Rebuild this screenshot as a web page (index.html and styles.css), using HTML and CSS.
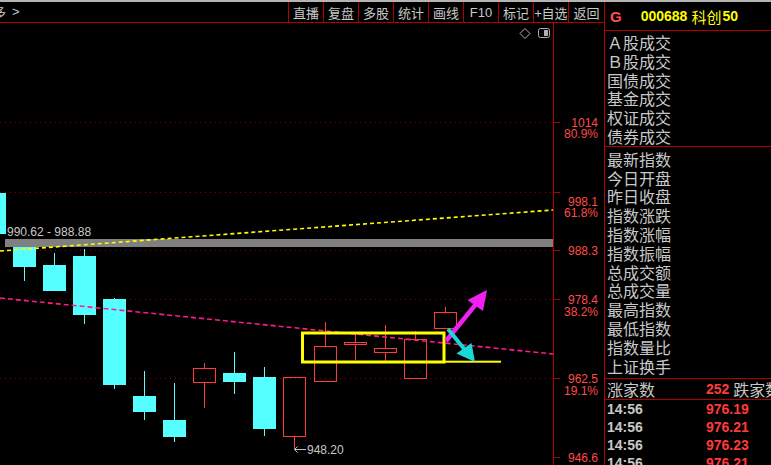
FILE: index.html
```html
<!DOCTYPE html>
<html lang="zh-CN">
<head>
<meta charset="utf-8">
<title>科创50</title>
<link rel="stylesheet" href="styles.css">
</head>
<body>
<div class="topline"></div>
<div class="app">
  <div class="main">
    <div class="toolbar">
      <div class="crumb"><span class="cut">多</span><span class="gt">&gt;</span></div>
      <div class="tools">
        <span class="tool">直播</span>
        <span class="tool">复盘</span>
        <span class="tool">多股</span>
        <span class="tool">统计</span>
        <span class="tool">画线</span>
        <span class="tool latin">F10</span>
        <span class="tool">标记</span>
        <span class="tool">+自选</span>
        <span class="tool">返回</span>
      </div>
    </div>
    <div class="chart">
      <div class="plot">
        <svg class="plot-svg" width="553" height="442" viewBox="0 23 553 442">
          <g stroke="#900000" stroke-width="1" stroke-dasharray="1 4">
            <line x1="0" y1="122.5" x2="553" y2="122.5"/>
            <line x1="0" y1="192.5" x2="553" y2="192.5"/>
            <line x1="0" y1="250.5" x2="553" y2="250.5"/>
            <line x1="0" y1="299.5" x2="553" y2="299.5"/>
            <line x1="0" y1="378.5" x2="553" y2="378.5"/>
          </g>
          <g fill="#55ffff">
            <rect x="0" y="193" width="6" height="41"/>
            <rect x="13" y="240" width="23" height="27"/><rect x="24" y="267" width="1" height="14"/>
            <rect x="43" y="265" width="23" height="26"/><rect x="54" y="253" width="1" height="12"/>
            <rect x="73" y="256" width="23" height="59"/><rect x="84" y="249" width="1" height="75"/>
            <rect x="103" y="299" width="23" height="86"/><rect x="114" y="298" width="1" height="91"/>
            <rect x="133" y="396" width="23" height="16"/><rect x="144" y="371" width="1" height="49"/>
            <rect x="163" y="420" width="23" height="17"/><rect x="174" y="383" width="1" height="59"/>
            <rect x="223" y="373" width="23" height="9"/><rect x="234" y="352" width="1" height="42"/>
            <rect x="253" y="377" width="23" height="52"/><rect x="264" y="367" width="1" height="69"/>
          </g>
          <g fill="none" stroke="#ff3a3a" stroke-width="1">
            <rect x="193.5" y="368.5" width="22" height="14"/>
            <rect x="283.5" y="377.5" width="22" height="59"/>
            <rect x="314.5" y="346.5" width="22" height="35"/>
            <rect x="344.5" y="342.5" width="22" height="2"/>
            <rect x="374.5" y="348.5" width="22" height="4"/>
            <rect x="404.5" y="339.5" width="22" height="39"/>
            <rect x="434.5" y="312.5" width="22" height="16"/>
          </g>
          <g fill="#ff3a3a">
            <rect x="204" y="363" width="1" height="5"/><rect x="204" y="383" width="1" height="25"/>
            <rect x="294" y="437" width="1" height="13"/>
            <rect x="325" y="322" width="1" height="24"/>
            <rect x="355" y="333" width="1" height="9"/><rect x="355" y="345" width="1" height="15"/>
            <rect x="385" y="325" width="1" height="23"/><rect x="385" y="353" width="1" height="8"/>
            <rect x="415" y="331" width="1" height="8"/>
            <rect x="445" y="307" width="1" height="5"/>
          </g>
          <rect x="5" y="239" width="548" height="8" fill="#808080"/>
          <text class="svg-label" x="7" y="235.5">990.62 - 988.88</text>
          <line x1="0" y1="251" x2="553" y2="210" stroke="#ffff00" stroke-width="1.6" stroke-dasharray="4 3"/>
          <line x1="0" y1="298" x2="553" y2="354" stroke="#ff1a8c" stroke-width="1.6" stroke-dasharray="5 3"/>
          <path d="M294.5 449.5 H306 M294.5 449.5 l3 -3 M294.5 449.5 l3 3" stroke="#c0c0c0" stroke-width="1" fill="none"/>
          <text class="svg-label" x="307" y="454">948.20</text>
          <rect x="302.5" y="333" width="141.5" height="29" fill="none" stroke="#ffff00" stroke-width="3"/>
          <rect x="444" y="360.7" width="57" height="2" fill="#ffff00"/>
          <line x1="446" y1="341" x2="476" y2="304" stroke="#f020f0" stroke-width="4.5"/>
          <polygon points="467.5,300 487,290 483,311" fill="#f020f0"/>
          <line x1="448" y1="329" x2="465" y2="350" stroke="#1ad8d8" stroke-width="4"/>
          <polygon points="456.5,353.5 475,362 471.5,343" fill="#1ad8d8"/>
        </svg>
        <div class="plot-icons">
          <svg width="12" height="11" viewBox="0 0 12 11"><polygon points="6,0.5 11,5.5 6,10.5 1,5.5" fill="none" stroke="#b0b0b0" stroke-width="1"/></svg>
          <svg width="13" height="11" viewBox="0 0 13 11"><rect x="0.5" y="0.5" width="11" height="9" rx="2" fill="none" stroke="#b0b0b0" stroke-width="1"/><rect x="6" y="2" width="4" height="6" fill="#b0b0b0"/></svg>
        </div>
      </div>
      <div class="axis">
        <svg width="50" height="442" viewBox="0 23 50 442">
          <g fill="#b00000">
            <rect x="0" y="122" width="6" height="1"/>
            <rect x="0" y="192" width="6" height="1"/>
            <rect x="0" y="250" width="6" height="1"/>
            <rect x="0" y="299" width="6" height="1"/>
            <rect x="0" y="378" width="6" height="1"/>
            <rect x="0" y="457" width="6" height="1"/>
          </g>
          <g class="axis-label" text-anchor="end">
            <text x="44" y="127">1014</text>
            <text x="44" y="138">80.9%</text>
            <text x="44" y="205.5">998.1</text>
            <text x="44" y="216.5">61.8%</text>
            <text x="44" y="255">988.3</text>
            <text x="44" y="304">978.4</text>
            <text x="44" y="315.5">38.2%</text>
            <text x="44" y="383">962.5</text>
            <text x="44" y="394.5">19.1%</text>
            <text x="44" y="461.5">946.6</text>
          </g>
        </svg>
      </div>
    </div>
  </div>
  <aside class="panel">
    <div class="panel-head"><span class="g">G</span><span class="code">000688</span><span class="name">科创</span><span class="code">50</span></div>
    <ul class="rows sec1">
      <li>Ａ股成交</li>
      <li>Ｂ股成交</li>
      <li>国债成交</li>
      <li>基金成交</li>
      <li>权证成交</li>
      <li>债券成交</li>
    </ul>
    <ul class="rows sec2">
      <li>最新指数</li>
      <li>今日开盘</li>
      <li>昨日收盘</li>
      <li>指数涨跌</li>
      <li>指数涨幅</li>
      <li>指数振幅</li>
      <li>总成交额</li>
      <li>总成交量</li>
      <li>最高指数</li>
      <li>最低指数</li>
      <li>指数量比</li>
      <li>上证换手</li>
    </ul>
    <div class="breadth"><span class="b-label">涨家数</span><span class="b-num">252</span><span class="b-label2">跌家数</span></div>
    <div class="ticks">
      <span class="t">14:56</span><span class="p">976.19</span>
      <span class="t">14:56</span><span class="p">976.21</span>
      <span class="t">14:56</span><span class="p">976.23</span>
      <span class="t">14:56</span><span class="p">976.21</span>
    </div>
  </aside>
</div>
</body>
</html>
```
FILE: styles.css
```css
html, body {
  margin: 0;
  padding: 0;
  background: #000;
}
body {
  width: 771px;
  height: 465px;
  overflow: hidden;
  font-family: "Noto Sans CJK SC", "Liberation Sans", sans-serif;
  color: #c8c8c8;
}
.topline {
  height: 2px;
  background: #b4b4b4;
}
.app {
  display: flex;
  height: 463px;
}
.main {
  width: 604px;
  display: flex;
  flex-direction: column;
}
.toolbar {
  height: 20px;
  flex: none;
  border-bottom: 1px solid #b00000;
  display: flex;
}
.crumb {
  flex: 1;
  display: flex;
  align-items: center;
  overflow: hidden;
  font-size: 13px;
  line-height: 20px;
}
.crumb .cut {
  margin-left: -7px;
}
.crumb .gt {
  margin-left: 6px;
  font-family: "Liberation Sans", sans-serif;
  font-size: 13px;
}
.tools {
  display: flex;
}
.tool {
  width: 34px;
  border-left: 1px solid #b00000;
  display: flex;
  align-items: center;
  justify-content: center;
  font-size: 13px;
  white-space: nowrap;
}
.tool:last-child {
  width: 35px;
}
.tool.latin {
  font-family: "Liberation Sans", sans-serif;
}
.chart {
  flex: 1;
  display: flex;
  min-height: 0;
}
.plot {
  width: 553px;
  position: relative;
}
.plot-svg {
  display: block;
}
.svg-label {
  font-family: "Liberation Sans", sans-serif;
  font-size: 12px;
  fill: #c8c8c8;
}
.plot-icons {
  position: absolute;
  top: 5px;
  right: 2px;
  display: flex;
  gap: 7px;
}
.plot-icons svg {
  display: block;
}
.axis {
  width: 50px;
  border-left: 1px solid #b00000;
}
.axis svg {
  display: block;
}
.axis-label {
  font-family: "Liberation Sans", sans-serif;
  font-size: 12px;
  fill: #ff4a4a;
}
.panel {
  width: 166px;
  border-left: 1px solid #b00000;
  display: flex;
  flex-direction: column;
  overflow: hidden;
}
.panel > * {
  flex: none;
}
.panel-head {
  height: 28px;
  border-bottom: 1px solid #b00000;
  display: flex;
  align-items: center;
  padding-left: 5px;
}
.panel-head .g {
  font-family: "Liberation Sans", sans-serif;
  font-weight: bold;
  font-size: 15px;
  color: #ff5050;
  margin-right: 19px;
}
.panel-head .code {
  font-family: "Liberation Sans", sans-serif;
  font-weight: bold;
  font-size: 14px;
  color: #ffff00;
}
.panel-head .name {
  font-size: 15px;
  color: #ffff00;
  margin: 0 1px 0 4px;
}
.rows {
  list-style: none;
  margin: 0;
  padding: 0 0 0 2px;
  border-bottom: 1px solid #b00000;
  font-size: 16px;
  line-height: 18.8px;
}
.sec1 {
  padding-top: 2px;
}
.sec2 {
  padding-top: 3px;
  padding-bottom: 3px;
}
.rows li {
  height: 18.8px;
  white-space: nowrap;
}
.breadth {
  height: 20px;
  border-bottom: 1px solid #b00000;
  display: flex;
  align-items: center;
  padding-left: 2px;
  font-size: 16px;
  white-space: nowrap;
  overflow: hidden;
}
.b-label {
  width: 99px;
  flex: none;
}
.b-num {
  font-family: "Liberation Sans", sans-serif;
  font-weight: bold;
  font-size: 14px;
  color: #ff3a3a;
  margin-right: 4px;
}
.ticks {
  display: grid;
  grid-template-columns: 99px 1fr;
  grid-auto-rows: 18px;
  align-items: center;
  padding-left: 2px;
  font-family: "Liberation Sans", sans-serif;
  font-weight: bold;
  font-size: 14px;
}
.ticks .t {
  color: #c8c8c8;
}
.ticks .p {
  color: #ff3a3a;
}
```
